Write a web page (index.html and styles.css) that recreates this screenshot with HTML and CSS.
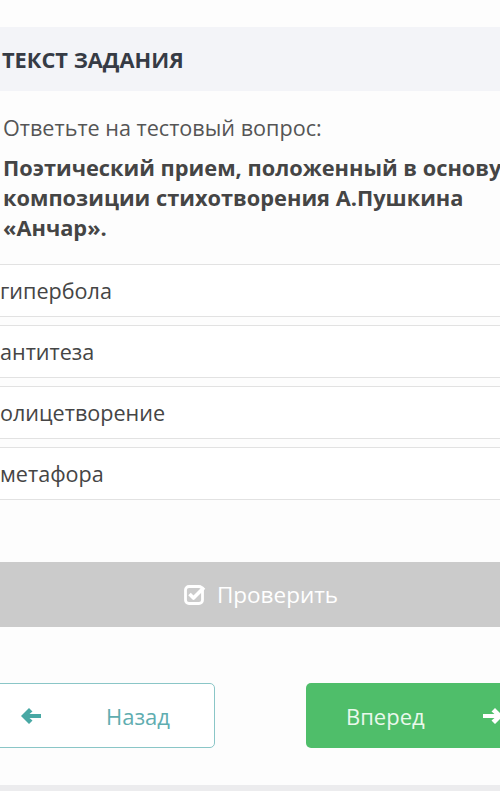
FILE: index.html
```html
<!DOCTYPE html>
<html lang="ru">
<head>
    <meta charset="UTF-8">
    <meta name="viewport" content="width=device-width, initial-scale=1.0">
    <title>Текст задания</title>
    <link rel="stylesheet" href="styles.css">
</head>
<body>
    <div class="page">
        <div class="task-head">ТЕКСТ ЗАДАНИЯ</div>

        <div class="task-body">
            <p class="intro">Ответьте на тестовый вопрос:</p>
            <p class="question">Поэтический прием, положенный в основу композиции стихотворения А.Пушкина «Анчар».</p>
        </div>

        <ul class="answers">
            <li class="answer">гипербола</li>
            <li class="answer">антитеза</li>
            <li class="answer">олицетворение</li>
            <li class="answer">метафора</li>
        </ul>

        <button type="button" class="check-button">
            <svg class="check-icon" viewBox="0 0 22 22" width="22" height="22">
                <rect x="1.5" y="3.5" width="17" height="17" rx="3.5" fill="none" stroke="#fff" stroke-width="2.8"/>
                <path d="M5.5 11 L9.5 15 L20 4.5" fill="none" stroke="#fff" stroke-width="3.6" stroke-linejoin="round"/>
            </svg>
            Проверить
        </button>

        <div class="nav">
            <button type="button" class="nav-back">
                <svg class="arrow" viewBox="0 0 22 18" width="22" height="18">
                    <path d="M1 9 L9 1 L12.5 4.5 L9.5 7 L21 7 L21 11 L9.5 11 L12.5 13.5 L9 17 Z" fill="#48a8a4"/>
                </svg>
                <span class="nav-text">Назад</span>
            </button>
            <button type="button" class="nav-next">
                <span class="nav-text">Вперед</span>
                <svg class="arrow" viewBox="0 0 22 18" width="22" height="18">
                    <path d="M21 9 L13 1 L9.5 4.5 L12.5 7 L1 7 L1 11 L12.5 11 L9.5 13.5 L13 17 Z" fill="#fff"/>
                </svg>
            </button>
        </div>

        <div class="footer-band"></div>
    </div>
</body>
</html>
```

FILE: styles.css
```css
body {
    font-family: "Open Sans", "Noto Sans", sans-serif;
    background-color: #fdfdfd;
    margin: 0;
    padding: 0;
    overflow: hidden;
    height: 791px;
}
.page {
    width: 540px;
    margin-left: -16px;
    padding-top: 27px;
}
.task-head {
    height: 64px;
    background-color: #f3f4f8;
    display: flex;
    align-items: center;
    padding-left: 18px;
    font-size: 21.8px;
    font-weight: 700;
    color: #363b45;
    box-sizing: border-box;
}
.task-body {
    padding-left: 19px;
}
.intro {
    margin: 23px 0 0;
    font-size: 21.6px;
    line-height: 28px;
    color: #555;
}
.question {
    margin: 11px 0 0;
    font-size: 21.8px;
    line-height: 30px;
    font-weight: 700;
    color: #454545;
    width: 520px;
}
.answers {
    list-style: none;
    margin: 21px 0 0;
    padding: 0;
}
.answer {
    height: 53px;
    box-sizing: border-box;
    border: 1px solid #e2e2e2;
    background-color: #fff;
    margin-bottom: 8px;
    display: flex;
    align-items: center;
    padding-left: 15px;
    font-size: 21.6px;
    color: #454545;
}
.check-button {
    display: flex;
    align-items: center;
    justify-content: center;
    gap: 11px;
    width: 100%;
    height: 65px;
    margin-top: 62px;
    padding-left: 20px;
    border: none;
    background-color: #cbcbcb;
    color: #fff;
    font-family: inherit;
    font-size: 22.5px;
}
.check-icon {
    margin-top: -2px;
}
.nav {
    display: flex;
    justify-content: space-between;
    margin-top: 56px;
}
.nav button {
    height: 65px;
    display: flex;
    align-items: center;
    border-radius: 5px;
    font-family: inherit;
    font-size: 22px;
    box-sizing: border-box;
}
.nav-back {
    width: 231px;
    padding-left: 35px;
    background-color: #fff;
    border: 1.5px solid #8ac6c7;
    color: #5fadb0;
}
.nav-back .nav-text {
    margin-left: 64px;
}
.nav-next {
    width: 218px;
    padding: 0 20px 0 40px;
    background-color: #4fbe6a;
    border: none;
    color: #eaf8ec;
}
.nav-next .arrow {
    margin-left: auto;
}
.footer-band {
    height: 40px;
    margin-top: 37px;
    background-color: #ececee;
}
```
